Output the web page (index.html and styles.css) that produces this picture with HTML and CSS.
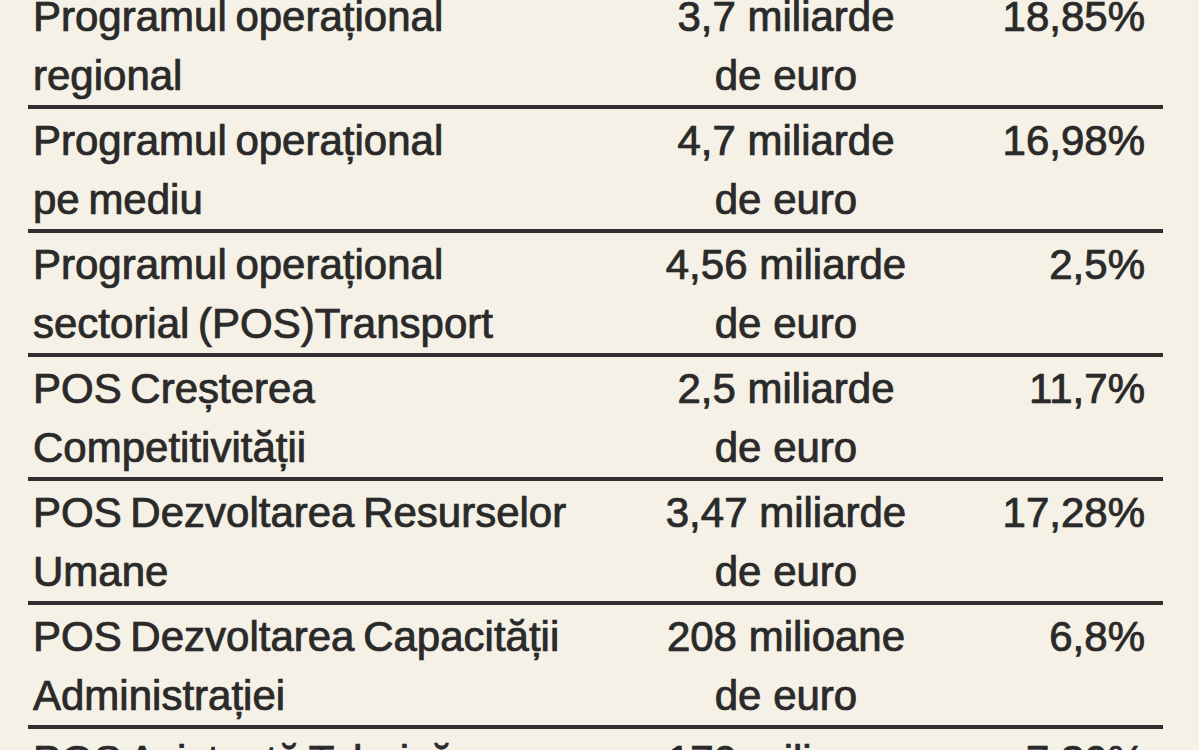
FILE: index.html
```html
<!DOCTYPE html>
<html lang="ro">
<head>
<meta charset="utf-8">
<title>Programe operaționale</title>
<link rel="stylesheet" href="styles.css">
</head>
<body>
<div class="table">
  <div class="row">
    <div class="name">Programul operațional<br>regional</div>
    <div class="amount">3,7 miliarde<br>de euro</div>
    <div class="pct">18,85%</div>
  </div>
  <div class="row">
    <div class="name">Programul operațional<br>pe mediu</div>
    <div class="amount">4,7 miliarde<br>de euro</div>
    <div class="pct">16,98%</div>
  </div>
  <div class="row">
    <div class="name">Programul operațional<br>sectorial (POS)Transport</div>
    <div class="amount">4,56 miliarde<br>de euro</div>
    <div class="pct">2,5%</div>
  </div>
  <div class="row">
    <div class="name">POS Creșterea<br>Competitivității</div>
    <div class="amount">2,5 miliarde<br>de euro</div>
    <div class="pct">11,7%</div>
  </div>
  <div class="row">
    <div class="name">POS Dezvoltarea Resurselor<br>Umane</div>
    <div class="amount">3,47 miliarde<br>de euro</div>
    <div class="pct">17,28%</div>
  </div>
  <div class="row">
    <div class="name">POS Dezvoltarea Capacității<br>Administrației</div>
    <div class="amount">208 milioane<br>de euro</div>
    <div class="pct">6,8%</div>
  </div>
  <div class="row">
    <div class="name">POS Asistență Tehnică</div>
    <div class="amount">170 milioane<br>de euro</div>
    <div class="pct">7,30%</div>
  </div>
</div>
</body>
</html>
```
FILE: styles.css
```css
html, body {
  margin: 0;
  padding: 0;
  overflow: hidden;
  background: #f5f1e7;
}
body {
  height: 750px;
  font-family: "Liberation Sans", Arial, sans-serif;
  color: #2b2a2a;
}
.table {
  margin: -15px 0 0 28px;
  width: 1135px;
}
.row {
  display: grid;
  grid-template-columns: 590px 336px 1fr;
  padding-top: 2px;
  border-bottom: 4px solid #2f2f2f;
  font-size: 42px;
  line-height: 59px;
  -webkit-text-stroke: 0.7px #2b2a2a;
  text-shadow: 0 0 1px rgba(40, 40, 40, 0.5);
  white-space: nowrap;
}
.name {
  padding-left: 5px;
  word-spacing: -3px;
}
.amount {
  text-align: center;
}
.pct {
  text-align: right;
  padding-right: 18px;
}
```
